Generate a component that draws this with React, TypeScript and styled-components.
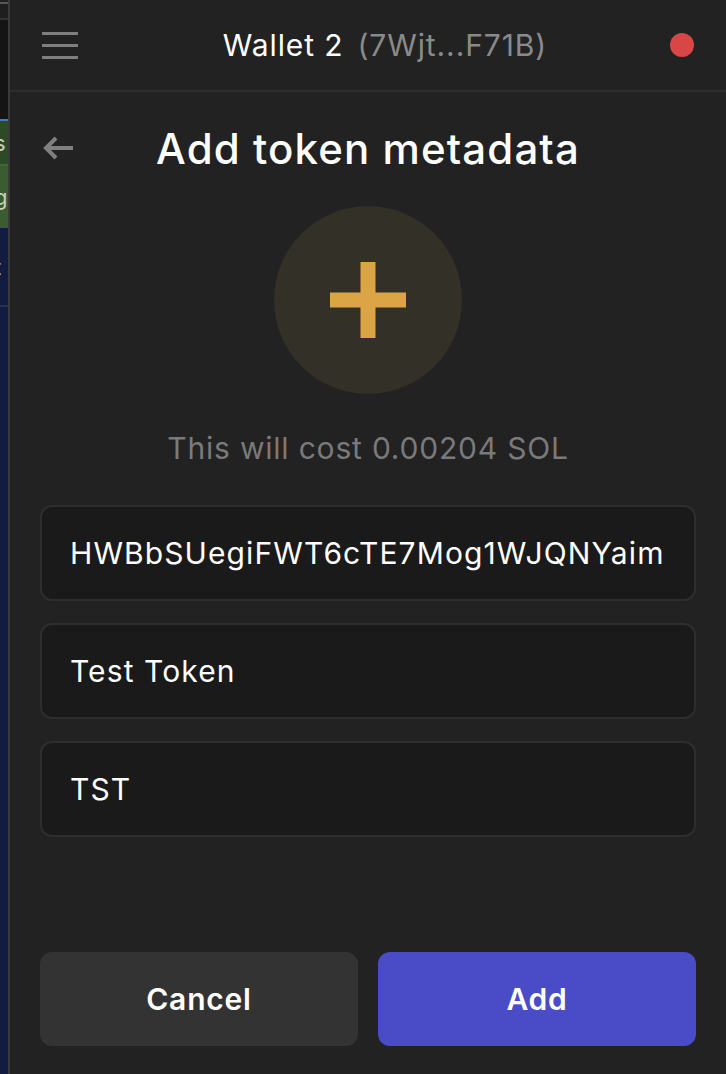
import React from 'react'
import styled, { createGlobalStyle } from 'styled-components'

const GlobalStyle = createGlobalStyle`
  html, body {
    margin: 0;
    padding: 0;
    background: #222222;
    font-family: Inter, "Noto Sans", sans-serif;
    -webkit-font-smoothing: antialiased;
  }
  * { box-sizing: border-box; }
`

const Screen = styled.div`
  display: flex;
  height: 100vh;
  overflow: hidden;
`

// window of the app behind the wallet popup
const Behind = styled.div`
  width: 8px;
  display: flex;
  flex-direction: column;
  background: #121b40;
  overflow: hidden;
`

const BehindBlock = styled.div<{ $h: number; $bg: string; $line?: string }>`
  height: ${p => p.$h}px;
  flex-shrink: 0;
  background: ${p => p.$bg};
  border-bottom: ${p => (p.$line ? `2px solid ${p.$line}` : 'none')};
  color: #c8d0c0;
  font-size: 22px;
  line-height: ${p => p.$h}px;
  text-indent: -6px;
  white-space: nowrap;
`

const Divider = styled.div`
  width: 2px;
  background: #3a3a3a;
`

const Panel = styled.div`
  flex: 1;
  display: flex;
  flex-direction: column;
  background: #222222;
`

const Header = styled.header`
  height: 92px;
  flex-shrink: 0;
  display: flex;
  align-items: center;
  justify-content: space-between;
  padding: 0 32px 0 32px;
  border-bottom: 2px solid #2e2e2e;
`

const Menu = styled.div`
  width: 36px;
  display: flex;
  flex-direction: column;
  gap: 9px;

  & span {
    height: 3px;
    background: #7f7f7f;
  }
`

const WalletName = styled.div`
  font-size: 30px;
  letter-spacing: 0.9px;
  color: #ffffff;
  display: flex;
  align-items: baseline;
  gap: 14px;
  margin-left: 22px;
`

const Address = styled.span`
  color: #8a8a8a;
`

const Dot = styled.div`
  width: 24px;
  height: 24px;
  border-radius: 50%;
  background: #d94646;
`

const Body = styled.main`
  flex: 1;
  display: flex;
  flex-direction: column;
  padding: 28px 30px 28px 30px;
`

const TitleRow = styled.div`
  display: grid;
  grid-template-columns: 1fr auto 1fr;
  align-items: center;
  height: 56px;
`

const Back = styled.div`
  display: flex;
  padding-left: 2px;
`

const Title = styled.h1`
  margin: 0;
  font-size: 42px;
  font-weight: 500;
  color: #ffffff;
  letter-spacing: 1.1px;
`

const Avatar = styled.div`
  align-self: center;
  width: 188px;
  height: 188px;
  margin-top: 30px;
  border-radius: 50%;
  background: #333027;
  display: flex;
  align-items: center;
  justify-content: center;
`

const Cost = styled.p`
  margin: 37px 0 0 0;
  text-align: center;
  font-size: 30px;
  line-height: 34px;
  letter-spacing: 0.8px;
  color: #7a7a7a;
`

const Fields = styled.div`
  display: flex;
  flex-direction: column;
  gap: 22px;
  margin-top: 40px;
`

const Field = styled.div`
  height: 96px;
  display: flex;
  align-items: center;
  padding: 0 28px;
  background: #1a1a1a;
  border: 2px solid #2e2e2e;
  border-radius: 12px;
  font-size: 30px;
  letter-spacing: 1.1px;
  color: #ffffff;
  white-space: nowrap;
  overflow: hidden;
`

const Actions = styled.div`
  margin-top: auto;
  display: grid;
  grid-template-columns: 1fr 1fr;
  gap: 20px;
`

const Button = styled.button<{ $primary?: boolean }>`
  height: 94px;
  border: none;
  border-radius: 12px;
  background: ${p => (p.$primary ? '#4a4bc7' : '#333333')};
  color: #ffffff;
  font-family: inherit;
  font-size: 30px;
  font-weight: 600;
  letter-spacing: 0.8px;
  cursor: pointer;
`

const App: React.FC = () => (
  <Screen>
    <GlobalStyle />
    <Behind>
      <BehindBlock $h={4} $bg="#202020" $line="#555555" />
      <BehindBlock $h={16} $bg="#1e1e1e" $line="#333333" />
      <BehindBlock $h={101} $bg="#141414" $line="#3a80c0" />
      <BehindBlock $h={45} $bg="#2b4a25" $line="#3f6a35">s</BehindBlock>
      <BehindBlock $h={62} $bg="#3a5c30">g</BehindBlock>
      <BehindBlock $h={79} $bg="#121b40" $line="#2a3050">t</BehindBlock>
    </Behind>
    <Divider />
    <Panel>
      <Header>
        <Menu>
          <span />
          <span />
          <span />
        </Menu>
        <WalletName>
          Wallet 2 <Address>(7Wjt...F71B)</Address>
        </WalletName>
        <Dot />
      </Header>
      <Body>
        <TitleRow>
          <Back>
            <svg width="32" height="26" viewBox="0 0 32 26" fill="none">
              <path d="M31 13H4M14 3L4 13L14 23" stroke="#808080" strokeWidth="4" />
            </svg>
          </Back>
          <Title>Add token metadata</Title>
          <span />
        </TitleRow>
        <Avatar>
          <svg width="76" height="76" viewBox="0 0 76 76">
            <path d="M30.5 0h15v76h-15zM0 30.5h76v15H0z" fill="#dba444" />
          </svg>
        </Avatar>
        <Cost>This will cost 0.00204 SOL</Cost>
        <Fields>
          <Field>HWBbSUegiFWT6cTE7Mog1WJQNYaim</Field>
          <Field>Test Token</Field>
          <Field>TST</Field>
        </Fields>
        <Actions>
          <Button>Cancel</Button>
          <Button $primary>Add</Button>
        </Actions>
      </Body>
    </Panel>
  </Screen>
)

export default App
